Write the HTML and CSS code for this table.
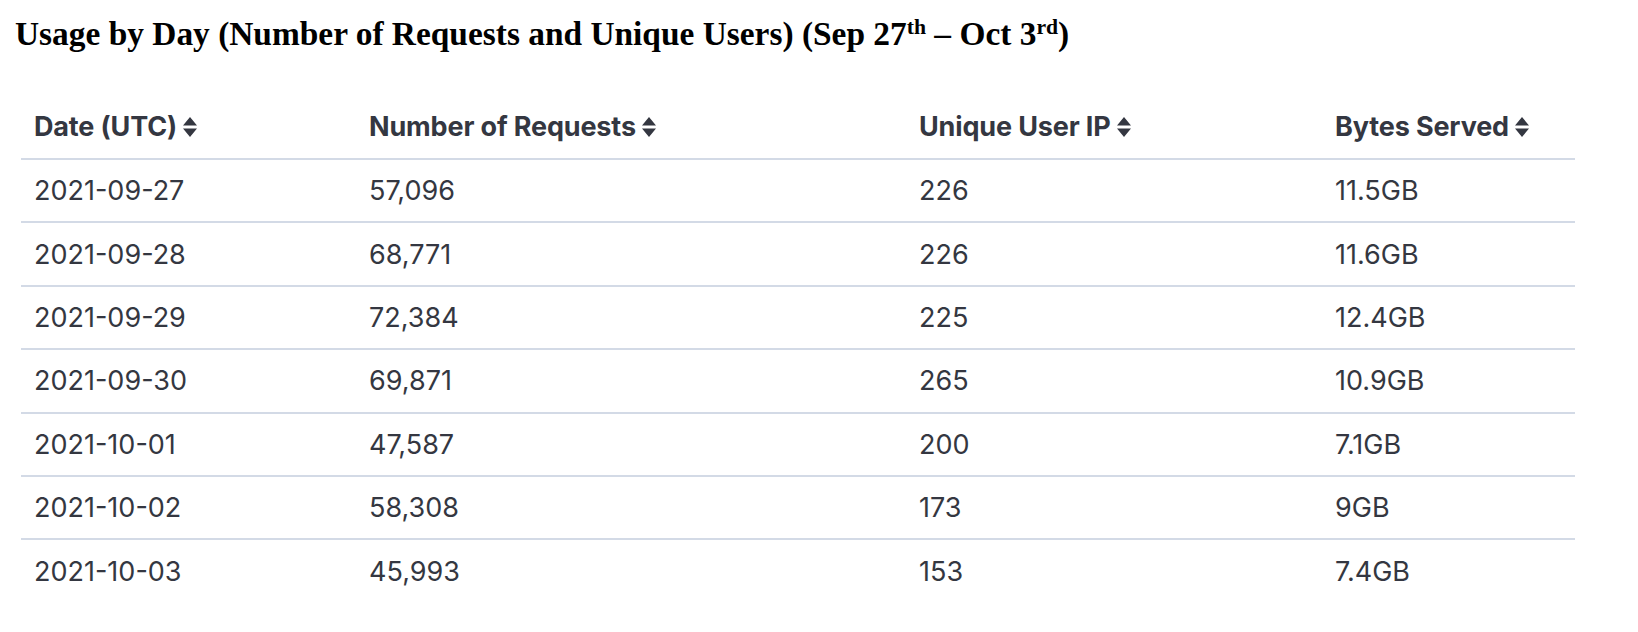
FILE: index.html
```html
<!DOCTYPE html>
<html>
<head>
<meta charset="utf-8">
<link rel="stylesheet" href="styles.css">
</head>
<body>
<h1 class="title">Usage by Day (Number of Requests and Unique Users) (Sep 27<sup>th</sup> – Oct 3<sup>rd</sup>)</h1>
<table class="usage">
  <colgroup>
    <col class="c1"><col class="c2"><col class="c3"><col class="c4">
  </colgroup>
  <thead>
    <tr>
      <th><span class="hd">Date (UTC)<svg class="sort" viewBox="0 0 14 22"><path d="M7 1 L14 9.5 H0 Z M7 21 L14 12.5 H0 Z"/></svg></span></th>
      <th><span class="hd">Number of Requests<svg class="sort" viewBox="0 0 14 22"><path d="M7 1 L14 9.5 H0 Z M7 21 L14 12.5 H0 Z"/></svg></span></th>
      <th><span class="hd">Unique User IP<svg class="sort" viewBox="0 0 14 22"><path d="M7 1 L14 9.5 H0 Z M7 21 L14 12.5 H0 Z"/></svg></span></th>
      <th><span class="hd">Bytes Served<svg class="sort" viewBox="0 0 14 22"><path d="M7 1 L14 9.5 H0 Z M7 21 L14 12.5 H0 Z"/></svg></span></th>
    </tr>
  </thead>
  <tbody>
    <tr><td>2021-09-27</td><td>57,096</td><td>226</td><td>11.5GB</td></tr>
    <tr><td>2021-09-28</td><td>68,771</td><td>226</td><td>11.6GB</td></tr>
    <tr><td>2021-09-29</td><td>72,384</td><td>225</td><td>12.4GB</td></tr>
    <tr><td>2021-09-30</td><td>69,871</td><td>265</td><td>10.9GB</td></tr>
    <tr><td>2021-10-01</td><td>47,587</td><td>200</td><td>7.1GB</td></tr>
    <tr><td>2021-10-02</td><td>58,308</td><td>173</td><td>9GB</td></tr>
    <tr><td>2021-10-03</td><td>45,993</td><td>153</td><td>7.4GB</td></tr>
  </tbody>
</table>
</body>
</html>
```

FILE: styles.css
```css
html, body {
  margin: 0;
  padding: 0;
  background: #ffffff;
}
body {
  padding: 0 0 0 15px;
}
.title {
  font-family: "Liberation Serif", "Times New Roman", serif;
  font-weight: bold;
  font-size: 33.4px;
  line-height: 34px;
  color: #000;
  margin: 0;
  padding-top: 17px;
}
.title sup {
  font-size: 0.65em;
  line-height: 0;
  vertical-align: 0.5em;
}
.usage {
  margin-top: 44px;
  margin-left: 6px;
  width: 1554px;
  border-collapse: collapse;
  table-layout: fixed;
  font-family: Inter, "Noto Sans", sans-serif;
  color: #343741;
}
.c1 { width: 335px; }
.c2 { width: 550px; }
.c3 { width: 416px; }
.c4 { width: auto; }
.usage th {
  text-align: left;
  font-weight: 700;
  letter-spacing: -0.15px;
  font-size: 27px;
  height: 63px;
  padding: 0 13px;
  border-bottom: 2px solid #d3dae6;
  vertical-align: middle;
}
.hd {
  display: inline-flex;
  align-items: center;
  gap: 6px;
}
.sort {
  flex: none;
  width: 14px;
  height: 22px;
  fill: #343741;
}
.usage td {
  font-size: 27px;
  font-weight: 400;
  height: 61.4px;
  padding: 0 13px;
  border-bottom: 2px solid #d3dae6;
  vertical-align: middle;
}
.usage tbody tr:last-child td {
  border-bottom: none;
}
```
